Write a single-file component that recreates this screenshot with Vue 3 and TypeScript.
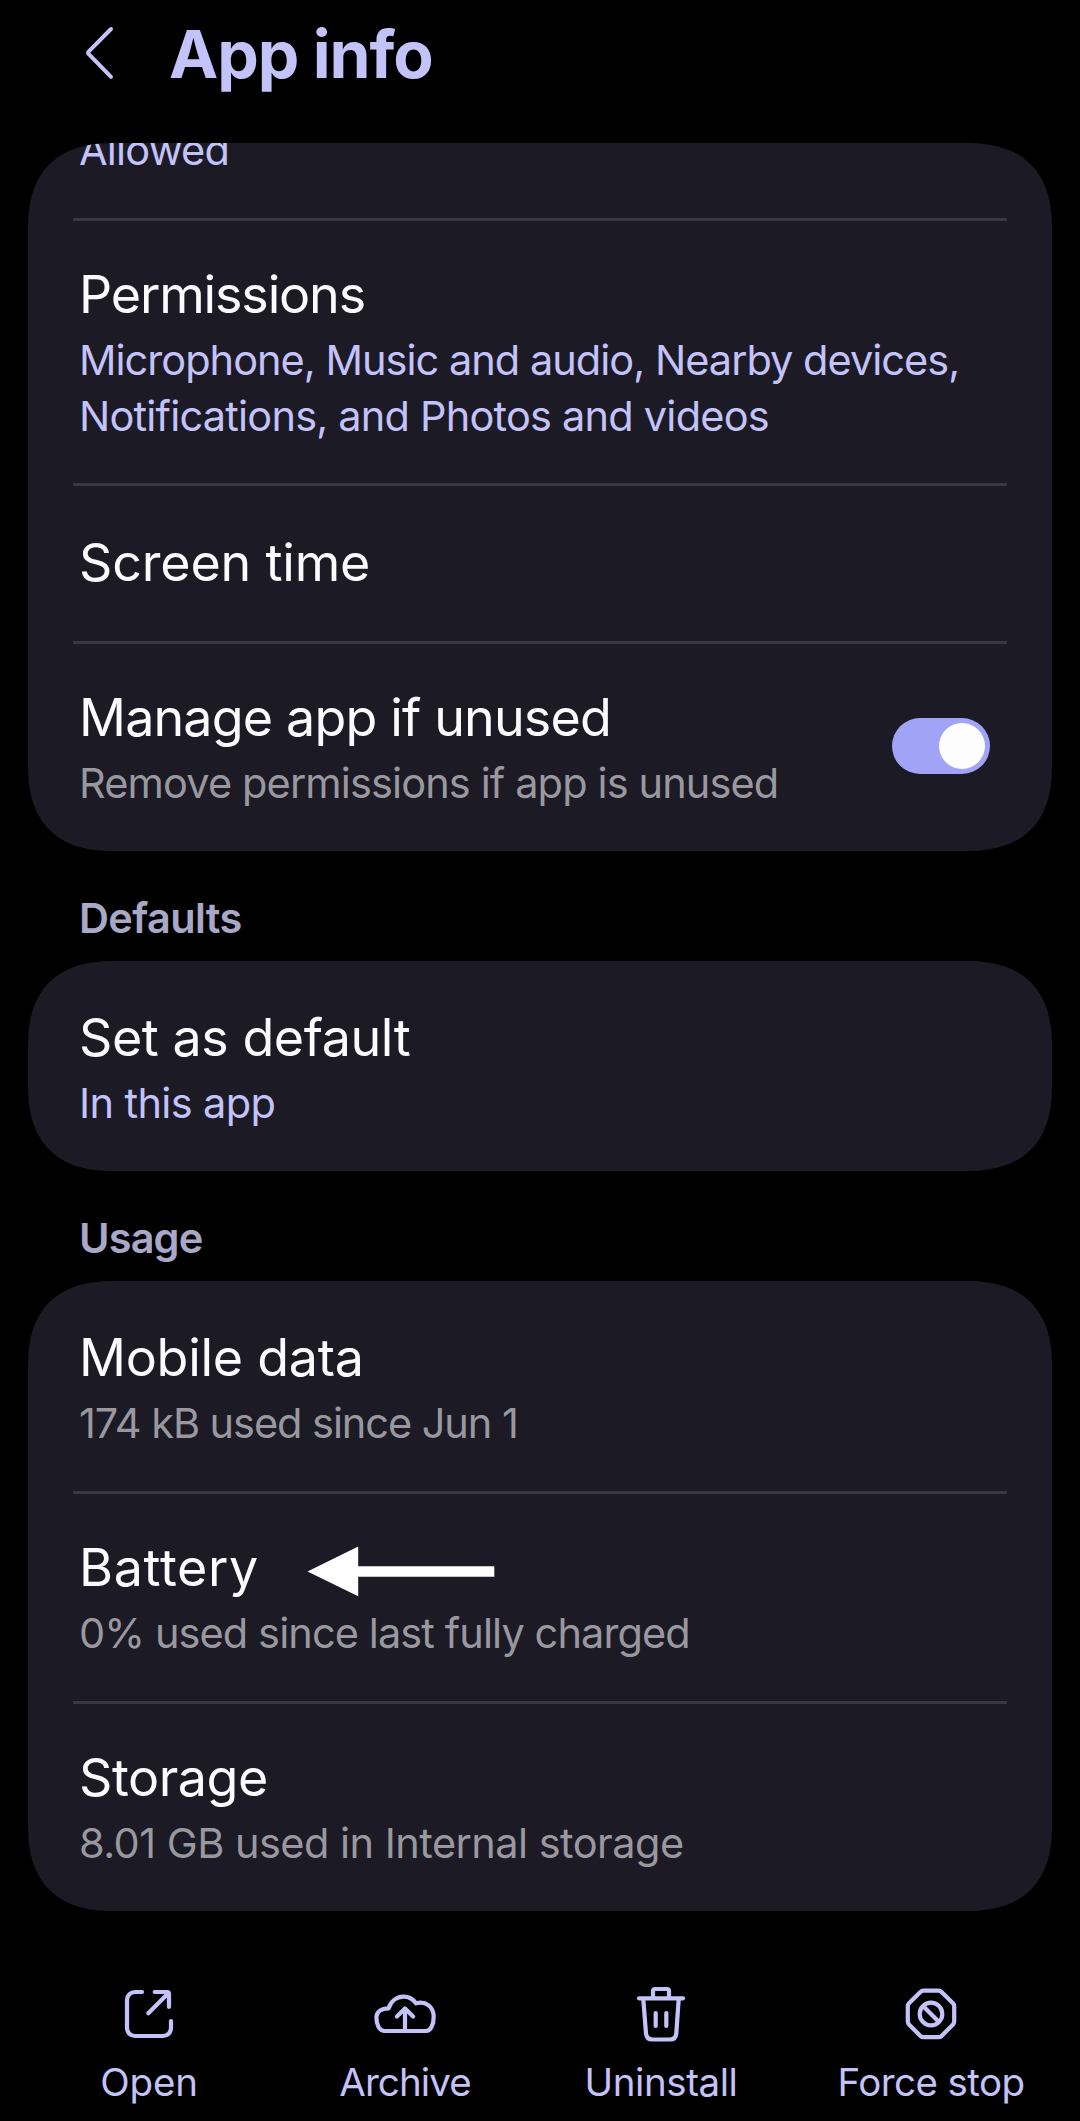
<script setup lang="ts">
interface TextRun {
  text: string
  tracking: number
}

interface Row {
  title?: TextRun
  lines?: TextRun[]
  accent?: boolean
  toggle?: boolean
  pointer?: boolean
  kind?: 'cut' | 'single'
}

interface Section {
  heading?: TextRun
  rows: Row[]
}

const run = (text: string, tracking = 0): TextRun => ({ text, tracking })
const track = (r: TextRun) => ({ letterSpacing: `${r.tracking}px` })

const sections: Section[] = [
  {
    rows: [
      { kind: 'cut', accent: true, lines: [run('Allowed', -0.8)] },
      {
        title: run('Permissions', -1.15),
        accent: true,
        lines: [
          run('Microphone, Music and audio, Nearby devices,', -0.98),
          run('Notifications, and Photos and videos', -0.79),
        ],
      },
      { kind: 'single', title: run('Screen time', -0.18) },
      {
        title: run('Manage app if unused', -0.84),
        lines: [run('Remove permissions if app is unused', -0.87)],
        toggle: true,
      },
    ],
  },
  {
    heading: run('Defaults', -0.63),
    rows: [{ title: run('Set as default', -0.45), accent: true, lines: [run('In this app', -0.63)] }],
  },
  {
    heading: run('Usage', -0.85),
    rows: [
      { title: run('Mobile data', -0.28), lines: [run('174 kB used since Jun 1', -1.06)] },
      { title: run('Battery', 0.65), lines: [run('0% used since last fully charged', -0.9)], pointer: true },
      { title: run('Storage', -0.45), lines: [run('8.01 GB used in Internal storage', -0.53)] },
    ],
  },
]

const actions: { label: TextRun; paths: string[] }[] = [
  {
    label: run('Open', -0.15),
    paths: [
      'M25 10H18a8 8 0 0 0-8 8V46a8 8 0 0 0 8 8H46a8 8 0 0 0 8-8V39',
      'M37.7 10H50a2 2 0 0 1 2 2V25',
      'M31.3 31.3L51 11.5',
    ],
  },
  {
    label: run('Archive', -0.9),
    paths: [
      'M12 49C6 49 3.4 42 3.4 35.3C3.4 30 8 26.3 15.6 26.3C18 19 24 14.7 30.7 14.7C36 14.7 40 17.3 43 21.3C53 18.5 60.7 25 60.7 34.7C60.7 42 58 49 53 49Z',
      'M32 48V27',
      'M23.9 34.5L32 26.4L40.1 34.5',
    ],
  },
  {
    label: run('Uninstall', -0.44),
    paths: [
      'M10 16.3H54',
      'M24 16V9a2 2 0 0 1 2-2H38a2 2 0 0 1 2 2V16',
      'M14.3 17L17 51.5Q17.5 57.5 23.5 57.5H41Q46.8 57.5 47.3 51.5L49.7 17',
      'M26.7 31V44M37.3 31V44',
    ],
  },
  {
    label: run('Force stop', -0.56),
    paths: [
      'M24.5 8.6H39.5Q41.3 8.6 42.6 9.9L54 21.3Q55.2 22.5 55.2 24.3V39.5Q55.2 41.3 54 42.5L42.6 53.9Q41.3 55.2 39.5 55.2H24.5Q22.7 55.2 21.4 53.9L10 42.5Q8.8 41.3 8.8 39.5V24.3Q8.8 22.5 10 21.3L21.4 9.9Q22.7 8.6 24.5 8.6Z',
      'M43.3 32a11.3 11.3 0 1 1-22.6 0a11.3 11.3 0 1 1 22.6 0',
      'M25 25L39 39',
    ],
  },
]
</script>

<template>
  <div class="screen">
    <header class="topbar">
      <svg class="back" width="36" height="60" viewBox="0 0 36 60" aria-label="Back">
        <path d="M29 6L6.8 28.4a2 2 0 0 0 0 2.8L29 53.8" />
      </svg>
      <h1 class="page-title">App info</h1>
    </header>

    <main>
      <section v-for="(section, s) in sections" :key="s">
        <h2 v-if="section.heading" class="heading" :style="track(section.heading)">
          {{ section.heading.text }}
        </h2>
        <div class="card">
          <div v-for="(row, r) in section.rows" :key="r" class="row" :class="row.kind">
            <div class="copy">
              <div v-if="row.title" class="title" :style="track(row.title)">{{ row.title.text }}</div>
              <div v-if="row.lines" class="summary" :class="{ accent: row.accent }">
                <div v-for="line in row.lines" :key="line.text" :style="track(line)">{{ line.text }}</div>
              </div>
            </div>
            <div v-if="row.toggle" class="toggle"><span class="knob"></span></div>
            <svg v-if="row.pointer" class="pointer" width="188" height="52" viewBox="0 0 188 52">
              <path d="M.5 25.4L51.2 .5V20.3H187.3V30.8H51.2V50.2Z" />
            </svg>
          </div>
        </div>
      </section>
    </main>

    <nav class="actions">
      <div v-for="action in actions" :key="action.label.text" class="action">
        <svg width="64" height="64" viewBox="0 0 64 64">
          <path v-for="d in action.paths" :key="d" :d="d" />
        </svg>
        <span :style="track(action.label)">{{ action.label.text }}</span>
      </div>
    </nav>
  </div>
</template>

<style>
html,
body {
  margin: 0;
  background: #000;
}
</style>

<style scoped>
.screen {
  width: 1080px;
  height: 2121px;
  overflow: hidden;
  background: #000;
  font-family: Inter, Roboto, sans-serif;
  font-weight: 400;
  white-space: nowrap;
}

.topbar {
  display: flex;
  align-items: flex-start;
  height: 143px;
  box-sizing: border-box;
  padding: 14px 0 0 82px;
}

.back {
  margin-top: 9px;
  fill: none;
  stroke: #c3c2f9;
  stroke-width: 4;
  stroke-linecap: round;
}

.page-title {
  margin: 0 0 0 51px;
  font-size: 66px;
  line-height: 81px;
  font-weight: 700;
  letter-spacing: -1.09px;
  color: #c3c2f9;
}

.heading {
  margin: 0;
  padding: 39px 0 15px 79px;
  font-size: 41.5px;
  line-height: 56px;
  font-weight: 600;
  color: #a9a8c6;
}

.card {
  margin: 0 28px;
  overflow: hidden;
  background: #1b1a25;
  border-radius: 72px;
}

@supports (corner-shape: superellipse(1.3)) {
  .card {
    border-radius: 87px;
    corner-shape: superellipse(1.3);
  }
}

.row {
  position: relative;
  display: flex;
  justify-content: space-between;
  box-sizing: border-box;
  margin: 0 45px;
  padding: 43px 17px 39px 6px;
  min-height: 210px;
  border-top: 3px solid #39383e;
}

.row:first-child {
  border-top-color: transparent;
}

.row.cut {
  align-items: flex-end;
  height: 75px;
  min-height: 0;
  padding-top: 0;
  padding-bottom: 40px;
}

.row.single {
  min-height: 158px;
  padding-top: 46px;
  padding-bottom: 47px;
}

.title {
  font-size: 52px;
  line-height: 62px;
  color: #fbfaff;
}

.summary {
  font-size: 41.5px;
  line-height: 56px;
  color: #99989e;
}

.title + .summary {
  margin-top: 6px;
}

.summary.accent {
  color: #c3c2f9;
}

.toggle {
  display: flex;
  align-items: center;
  justify-content: flex-end;
  box-sizing: border-box;
  width: 98px;
  height: 56px;
  margin-top: 31px;
  padding-right: 5px;
  border-radius: 28px;
  background: #a1a3f6;
}

.knob {
  width: 46px;
  height: 46px;
  border-radius: 50%;
  background: #fdfdfd;
}

.pointer {
  position: absolute;
  left: 234px;
  top: 52px;
  fill: #fff;
}

.actions {
  display: grid;
  grid-template-columns: 256px 256px 256px 284px;
  padding: 71px 0 0 21px;
}

.action {
  display: flex;
  flex-direction: column;
  align-items: center;
  gap: 12px;
  font-size: 38.5px;
  line-height: 48px;
  color: #c3c2f9;
}

.action svg {
  fill: none;
  stroke: #c3c2f9;
  stroke-width: 4.2;
  stroke-linecap: round;
  stroke-linejoin: round;
}
</style>
